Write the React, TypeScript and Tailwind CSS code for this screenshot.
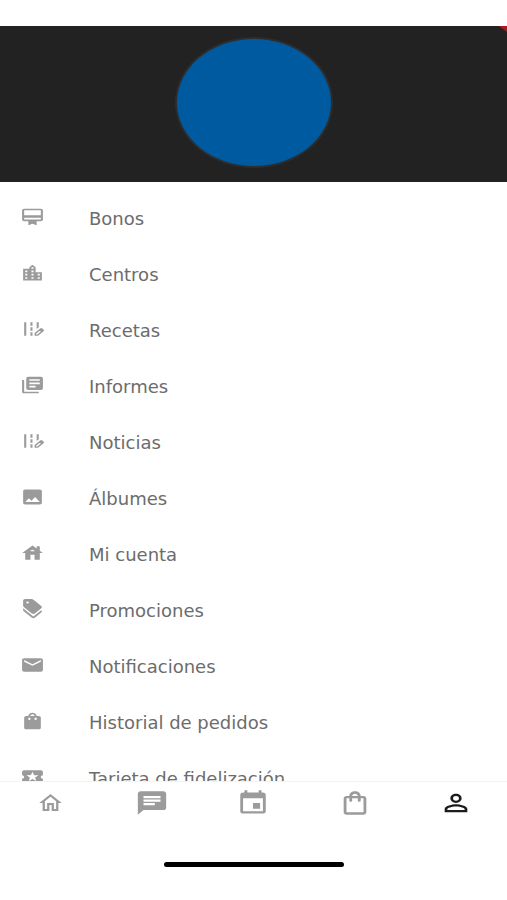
import type { IconType } from 'react-icons'
import {
  MdCardMembership,
  MdChat,
  MdDiscount,
  MdEditRoad,
  MdEmail,
  MdEvent,
  MdHouse,
  MdImage,
  MdLibraryBooks,
  MdLocalActivity,
  MdLocationCity,
  MdOutlineHome,
  MdOutlineShoppingBag,
  MdPersonOutline,
  MdShoppingBag,
} from 'react-icons/md'

interface MenuItem {
  label: string
  icon: IconType
}

interface TabItem extends MenuItem {
  size: string
  active?: boolean
}

const menuItems: MenuItem[] = [
  { label: 'Bonos', icon: MdCardMembership },
  { label: 'Centros', icon: MdLocationCity },
  { label: 'Recetas', icon: MdEditRoad },
  { label: 'Informes', icon: MdLibraryBooks },
  { label: 'Noticias', icon: MdEditRoad },
  { label: 'Álbumes', icon: MdImage },
  { label: 'Mi cuenta', icon: MdHouse },
  { label: 'Promociones', icon: MdDiscount },
  { label: 'Notificaciones', icon: MdEmail },
  { label: 'Historial de pedidos', icon: MdShoppingBag },
  { label: 'Tarjeta de fidelización', icon: MdLocalActivity },
]

const tabs: TabItem[] = [
  { label: 'Inicio', icon: MdOutlineHome, size: 'w-[27px] h-6' },
  { label: 'Mensajes', icon: MdChat, size: 'w-[34px] h-7' },
  { label: 'Calendario', icon: MdEvent, size: 'w-[34px] h-7' },
  { label: 'Tienda', icon: MdOutlineShoppingBag, size: 'w-[34px] h-7' },
  { label: 'Perfil', icon: MdPersonOutline, size: 'w-[34px] h-7', active: true },
]

function ProfileHeader() {
  return (
    <header className="relative flex h-39 shrink-0 justify-center overflow-hidden bg-[#222222] pt-[13px]">
      <div className="h-[127px] w-[154px] rounded-[50%] bg-[#005a9f] ring-2 ring-[#2d2d2d]" />
      {/* Corner ribbon */}
      <div className="absolute top-0 right-0 h-1.5 w-2 bg-[#a51c1e] [clip-path:polygon(0_0,100%_0,100%_100%)]" />
    </header>
  )
}

function MenuRow({ label, icon: Icon }: MenuItem) {
  return (
    <li>
      <button type="button" className="flex h-14 w-full items-center gap-11 pl-5 text-left">
        <Icon
          preserveAspectRatio="none"
          aria-hidden="true"
          className="mb-1 h-5 w-[25px] shrink-0 text-[#9b9b9b]"
        />
        <span className="text-[18px] leading-6 text-[#6c6c6c]">{label}</span>
      </button>
    </li>
  )
}

function TabBar() {
  return (
    <footer className="h-[119px] shrink-0 border-t border-[#f3f3f3] bg-white">
      <nav className="grid h-[42px] grid-cols-5">
        {tabs.map(({ label, icon: Icon, size, active }) => (
          <button
            key={label}
            type="button"
            aria-label={label}
            aria-current={active ? 'page' : undefined}
            className={`flex items-center justify-center ${active ? 'text-[#1c1c1c]' : 'text-[#9b9b9b]'}`}
          >
            <Icon preserveAspectRatio="none" className={size} />
          </button>
        ))}
      </nav>
      {/* Home indicator */}
      <div className="mx-auto mt-[38px] h-[5px] w-[180px] rounded-full bg-black" />
    </footer>
  )
}

export default function App() {
  return (
    <div className="flex h-screen flex-col bg-white pt-[26px] font-['DejaVu_Sans',sans-serif]">
      <ProfileHeader />
      <main className="min-h-0 flex-1 overflow-hidden pt-[9px]">
        <ul>
          {menuItems.map((item) => (
            <MenuRow key={item.label} {...item} />
          ))}
        </ul>
      </main>
      <TabBar />
    </div>
  )
}
